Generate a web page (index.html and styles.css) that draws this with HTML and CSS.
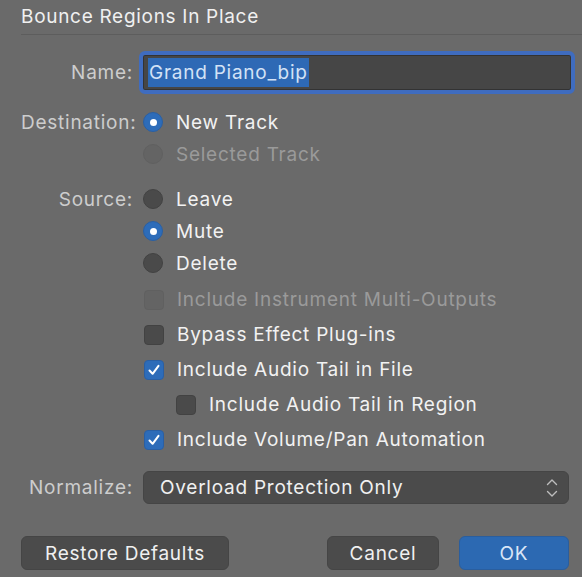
FILE: index.html
```html
<!DOCTYPE html>
<html>
<head>
<meta charset="utf-8">
<link rel="stylesheet" href="styles.css">
</head>
<body>
<div class="dialog">
  <div class="title">Bounce Regions In Place</div>
  <div class="sep"></div>

  <div class="row name-row">
    <div class="label">Name:</div>
    <div class="input"><span class="sel">Grand Piano_bip</span></div>
  </div>

  <div class="group dest">
    <div class="row r32">
      <div class="label">Destination:</div>
      <div class="opt"><span class="radio on"></span><span class="txt">New Track</span></div>
    </div>
    <div class="row r32">
      <div class="label"></div>
      <div class="opt disabled"><span class="radio dis"></span><span class="txt">Selected Track</span></div>
    </div>
  </div>

  <div class="group source">
    <div class="row r32">
      <div class="label">Source:</div>
      <div class="opt"><span class="radio"></span><span class="txt">Leave</span></div>
    </div>
    <div class="row r32">
      <div class="label"></div>
      <div class="opt"><span class="radio on"></span><span class="txt">Mute</span></div>
    </div>
    <div class="row r32">
      <div class="label"></div>
      <div class="opt"><span class="radio"></span><span class="txt">Delete</span></div>
    </div>
  </div>

  <div class="group checks">
    <div class="row r35">
      <div class="label"></div>
      <div class="opt disabled"><span class="check dis"></span><span class="txt">Include Instrument Multi-Outputs</span></div>
    </div>
    <div class="row r35">
      <div class="label"></div>
      <div class="opt"><span class="check"></span><span class="txt">Bypass Effect Plug-ins</span></div>
    </div>
    <div class="row r35">
      <div class="label"></div>
      <div class="opt"><span class="check on"><svg viewBox="0 0 20 20" width="20" height="20"><path d="M5.5 10.5 L8.6 13.8 L14.5 5.8" fill="none" stroke="#fff" stroke-width="2" stroke-linecap="round" stroke-linejoin="round"/></svg></span><span class="txt">Include Audio Tail in File</span></div>
    </div>
    <div class="row r35">
      <div class="label"></div>
      <div class="opt indent"><span class="check"></span><span class="txt">Include Audio Tail in Region</span></div>
    </div>
    <div class="row r35">
      <div class="label"></div>
      <div class="opt"><span class="check on"><svg viewBox="0 0 20 20" width="20" height="20"><path d="M5.5 10.5 L8.6 13.8 L14.5 5.8" fill="none" stroke="#fff" stroke-width="2" stroke-linecap="round" stroke-linejoin="round"/></svg></span><span class="txt">Include Volume/Pan Automation</span></div>
    </div>
  </div>

  <div class="row norm-row">
    <div class="label">Normalize:</div>
    <div class="popup">
      <span class="ptxt">Overload Protection Only</span>
      <svg class="stepper" viewBox="0 0 12 22" width="12" height="22"><path d="M1.5 7.5 L6 3 L10.5 7.5 M1.5 14.5 L6 19 L10.5 14.5" fill="none" stroke="#bdbdbd" stroke-width="1.4" stroke-linecap="round" stroke-linejoin="round"/></svg>
    </div>
  </div>

  <div class="buttons">
    <div class="btn restore">Restore Defaults</div>
    <div class="spacer"></div>
    <div class="btn cancel">Cancel</div>
    <div class="btn ok">OK</div>
  </div>
</div>
</body>
</html>
```

FILE: styles.css
```css
html, body {
  margin: 0;
  padding: 0;
  background: #6a6a6a;
}
body {
  width: 582px;
  height: 577px;
  overflow: hidden;
  font-family: "Inter", "Noto Sans", sans-serif;
  font-size: 19px;
  letter-spacing: 0.75px;
  color: #f2f2f2;
}
.dialog {
  display: flex;
  flex-direction: column;
  padding-left: 21px;
}
.title {
  height: 34px;
  line-height: 33px;
  font-size: 19px;
  letter-spacing: 0.7px;
  color: #f0f0f0;
}
.sep {
  height: 1px;
  background: #5d5d5d;
}
.row {
  display: flex;
  align-items: center;
}
.label {
  width: 112px;
  flex: none;
  text-align: right;
  color: #cdcdcd;
  margin-right: 10px;
  white-space: nowrap;
}
.name-row {
  margin-top: 16px;
  height: 43px;
}
.input {
  flex: none;
  width: 423px;
  height: 35px;
  margin-left: -4px;
  border: 4px solid #3f6cbf;
  border-radius: 6px;
  background: #464646;
  box-shadow: inset 0 0 0 1px #333333;
  display: flex;
  align-items: center;
  padding-left: 5px;
  box-sizing: content-box;
}
.sel {
  background: #2e69b5;
  color: #d3e2f6;
  height: 29px;
  line-height: 29px;
  padding: 0 1px 0 1px;
}
.dest {
  margin-top: 12px;
}
.source {
  margin-top: 13px;
}
.checks {
  margin-top: 3px;
}
.r32 { height: 32px; }
.r35 { height: 35px; }
.opt {
  display: flex;
  align-items: center;
  white-space: nowrap;
}
.opt.disabled .txt {
  color: #9a9a9a;
}
.opt.indent {
  margin-left: 32px;
}
.txt {
  margin-left: 13px;
}
.radio {
  width: 18px;
  height: 18px;
  border-radius: 50%;
  background: #4a4a4a;
  border: 1px solid #424242;
  flex: none;
  display: flex;
  align-items: center;
  justify-content: center;
}
.radio.on {
  background: #2d6cb9;
  border-color: #2a5fa3;
}
.radio.on::after {
  content: "";
  width: 7px;
  height: 7px;
  border-radius: 50%;
  background: #fff;
}
.radio.dis {
  background: #646464;
  border-color: #606060;
}
.check {
  width: 18px;
  height: 18px;
  border-radius: 4px;
  background: #4a4a4a;
  border: 1px solid #424242;
  flex: none;
  margin-left: 1px;
  position: relative;
}
.check svg {
  position: absolute;
  left: -1px;
  top: -1px;
}
.check.on {
  background: #2d6cb9;
  border-color: #2a5fa3;
}
.check.dis {
  background: #646464;
  border-color: #606060;
}
.norm-row {
  margin-top: 14px;
  height: 33px;
}
.popup {
  flex: none;
  width: 398px;
  height: 31px;
  border: 1px solid #454545;
  border-radius: 6px;
  background: #4b4b4b;
  display: flex;
  align-items: center;
  justify-content: space-between;
  padding: 0 10px 0 16px;
  box-sizing: content-box;
}
.ptxt {
  color: #f0f0f0;
}
.stepper {
  flex: none;
}
.buttons {
  display: flex;
  margin-top: 32px;
  height: 34px;
  padding-right: 13px;
}
.spacer { flex: 1; }
.btn {
  height: 32px;
  border: 1px solid #454545;
  border-radius: 6px;
  background: #4b4b4b;
  display: flex;
  align-items: center;
  justify-content: center;
  color: #f0f0f0;
}
.restore { width: 206px; }
.cancel { width: 110px; margin-right: 20px; }
.ok {
  width: 108px;
  background: #2c69b2;
  border-color: #2a5e9e;
  color: #d9e6f7;
}
```
